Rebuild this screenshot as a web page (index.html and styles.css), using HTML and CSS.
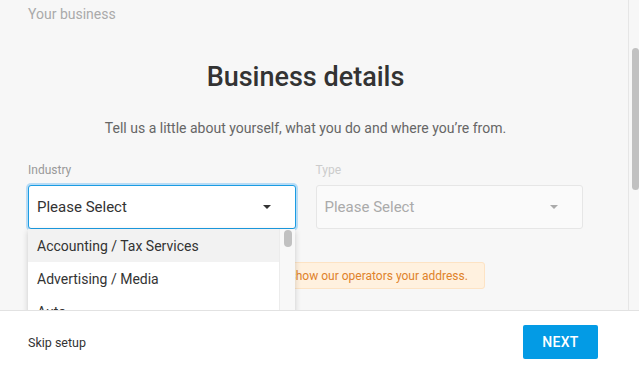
FILE: index.html
```html
<!DOCTYPE html>
<html lang="en">
<head>
    <meta charset="UTF-8">
    <meta name="viewport" content="width=device-width, initial-scale=1.0">
    <title>Your business</title>
    <link rel="stylesheet" href="styles.css">
</head>
<body>

    <div class="page">
        <div class="main">
            <div class="content">
                <p class="crumb">Your business</p>
                <h2 class="title">Business details</h2>
                <p class="subtitle">Tell us a little about yourself, what you do and where you’re from.</p>

                <div class="row">
                    <div class="field">
                        <span class="label">Industry</span>
                        <div class="select focused">
                            <span>Please Select</span>
                            <i class="caret"></i>
                        </div>
                        <div class="dropdown">
                            <ul class="options">
                                <li class="active">Accounting / Tax Services</li>
                                <li>Advertising / Media</li>
                                <li>Auto</li>
                            </ul>
                            <div class="dd-track"><div class="dd-thumb"></div></div>
                        </div>
                    </div>
                    <div class="field disabled">
                        <span class="label">Type</span>
                        <div class="select">
                            <span>Please Select</span>
                            <i class="caret"></i>
                        </div>
                    </div>
                </div>

                <div class="notice">We use this to find nearby matches. We never show our operators your address.</div>
            </div>

            <div class="scroll-track"><div class="scroll-thumb"></div></div>
        </div>

        <footer class="footer">
            <a class="skip" href="#">Skip setup</a>
            <button type="button" class="next-btn">NEXT</button>
        </footer>
    </div>

</body>
</html>
```

FILE: styles.css
```css
* {
    margin: 0;
    padding: 0;
    box-sizing: border-box;
    font-family: 'Roboto', 'Liberation Sans', sans-serif;
}

body {
    background: #f7f7f7;
    color: #333;
    font-size: 14px;
}

.page {
    height: 367px;
    display: flex;
    flex-direction: column;
    overflow: hidden;
}

.main {
    height: 310px;
    display: flex;
    overflow: hidden;
}

.content {
    flex: 1;
    padding: 5px 45px 0 28px;
}

.crumb {
    font-size: 14px;
    line-height: 18px;
    color: #aaa;
}

.title {
    margin-top: 38px;
    font-size: 27px;
    line-height: 32px;
    font-weight: 500;
    color: #333;
    text-align: center;
}

.subtitle {
    margin-top: 25px;
    font-size: 14px;
    line-height: 20px;
    color: #666;
    text-align: center;
}

.row {
    margin-top: 24px;
    display: flex;
    gap: 20px;
}

.field {
    flex: 1;
    position: relative;
}

.label {
    display: block;
    font-size: 12px;
    line-height: 16px;
    color: #999;
    margin-bottom: 7px;
}

.select {
    height: 44px;
    display: flex;
    align-items: center;
    justify-content: space-between;
    padding: 0 24px 0 8px;
    background: #fff;
    border: 1px solid #ddd;
    border-radius: 3px;
    font-size: 15px;
    color: #333;
}

.select.focused {
    border-color: #1b9ce2;
    box-shadow: 0 0 0 2px #b7dcf6;
}

.caret {
    width: 0;
    height: 0;
    border-left: 4px solid transparent;
    border-right: 4px solid transparent;
    border-top: 4px solid #333;
}

.disabled .label {
    color: #ccc;
}

.disabled .select {
    background: #fafafa;
    border-color: #e6e6e6;
    color: #aaa;
}

.disabled .caret {
    border-top-color: #aaa;
}

.dropdown {
    position: absolute;
    top: 67px;
    left: 0;
    right: 1px;
    height: 120px;
    display: flex;
    background: #fff;
    box-shadow: 0 2px 6px rgba(0, 0, 0, 0.18);
    z-index: 2;
}

.options {
    flex: 1;
    list-style: none;
}

.options li {
    height: 33px;
    padding: 0 9px;
    display: flex;
    align-items: center;
    font-size: 14px;
    color: #333;
}

.options li.active {
    background: #f2f2f2;
}

.dd-track {
    width: 16px;
    background: #f8f8f8;
    border-left: 1px solid #ececec;
    padding: 1px 0 0 4px;
}

.dd-thumb {
    width: 8px;
    height: 17px;
    border-radius: 4px;
    background: #c1c1c1;
}

.notice {
    display: inline-block;
    margin-top: 33px;
    padding: 0 16px;
    height: 27px;
    line-height: 26px;
    font-size: 12px;
    color: #e0822a;
    background: #fff1df;
    border: 1px solid #fde3c4;
    border-radius: 3px;
}

.scroll-track {
    width: 11px;
    border-left: 1px solid #e6e6e6;
    padding: 48px 0 0 3px;
}

.scroll-thumb {
    width: 7px;
    height: 142px;
    border-radius: 4px;
    background: #c1c1c1;
}

.footer {
    height: 57px;
    background: #fff;
    border-top: 1px solid #e2e2e2;
    display: flex;
    align-items: center;
    justify-content: space-between;
    padding: 6px 41px 0 28px;
}

.skip {
    font-size: 12.5px;
    color: #333;
    text-decoration: none;
}

.next-btn {
    width: 75px;
    height: 34px;
    background: #039be5;
    color: #fff;
    border: none;
    border-radius: 2px;
    font-size: 14px;
    font-weight: 500;
    letter-spacing: 0.3px;
}
```
